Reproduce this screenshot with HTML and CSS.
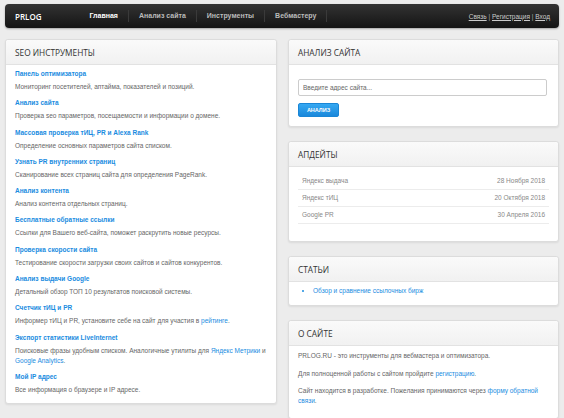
FILE: index.html
```html
<!DOCTYPE html>
<html lang="ru">
<head>
    <meta charset="UTF-8">
    <meta name="viewport" content="width=device-width, initial-scale=1.0">
    <title>PRLOG - инструменты для вебмастера</title>
    <link rel="stylesheet" href="styles.css">
</head>
<body>
    <!-- верхнее меню -->
    <div class="navbar">
        <a class="brand" href="#">PRLOG</a>
        <ul class="nav">
            <li class="active"><a href="#">Главная</a></li>
            <li><a href="#">Анализ сайта</a></li>
            <li><a href="#">Инструменты</a></li>
            <li><a href="#">Вебмастеру</a></li>
        </ul>
        <div class="user-links">
            <a href="#">Связь</a> | <a href="#">Регистрация</a> | <a href="#">Вход</a>
        </div>
    </div>

    <div class="columns">
        <!-- левая колонка -->
        <div class="panel tools">
            <div class="panel-head">SEO ИНСТРУМЕНТЫ</div>
            <div class="panel-body">
                <div class="tool">
                    <a class="tool-title" href="#">Панель оптимизатора</a>
                    <p>Мониторинг посетителей, аптайма, показателей и позиций.</p>
                </div>
                <div class="tool">
                    <a class="tool-title" href="#">Анализ сайта</a>
                    <p>Проверка seo параметров, посещаемости и информации о домене.</p>
                </div>
                <div class="tool">
                    <a class="tool-title" href="#">Массовая проверка тИЦ, PR и Alexa Rank</a>
                    <p>Определение основных параметров сайта списком.</p>
                </div>
                <div class="tool">
                    <a class="tool-title" href="#">Узнать PR внутренних страниц</a>
                    <p>Сканирование всех страниц сайта для определения PageRank.</p>
                </div>
                <div class="tool">
                    <a class="tool-title" href="#">Анализ контента</a>
                    <p>Анализ контента отдельных страниц.</p>
                </div>
                <div class="tool">
                    <a class="tool-title" href="#">Бесплатные обратные ссылки</a>
                    <p>Ссылки для Вашего веб-сайта, поможет раскрутить новые ресурсы.</p>
                </div>
                <div class="tool">
                    <a class="tool-title" href="#">Проверка скорости сайта</a>
                    <p>Тестирование скорости загрузки своих сайтов и сайтов конкурентов.</p>
                </div>
                <div class="tool">
                    <a class="tool-title" href="#">Анализ выдачи Google</a>
                    <p>Детальный обзор ТОП 10 результатов поисковой системы.</p>
                </div>
                <div class="tool">
                    <a class="tool-title" href="#">Счетчик тИЦ и PR</a>
                    <p>Информер тИЦ и PR, установите себе на сайт для участия в <a href="#">рейтинге</a>.</p>
                </div>
                <div class="tool">
                    <a class="tool-title" href="#">Экспорт статистики LiveInternet</a>
                    <p>Поисковые фразы удобным списком. Аналогичные утилиты для <a href="#">Яндекс Метрики</a> и <a href="#">Google Analytics</a>.</p>
                </div>
                <div class="tool">
                    <a class="tool-title" href="#">Мой IP адрес</a>
                    <p>Все информация о браузере и IP адресе.</p>
                </div>
            </div>
        </div>

        <!-- правая колонка -->
        <div class="side">
            <div class="panel">
                <div class="panel-head">АНАЛИЗ САЙТА</div>
                <div class="panel-body analyze">
                    <input class="site-input" type="text" placeholder="Введите адрес сайта...">
                    <button class="btn-blue">АНАЛИЗ</button>
                </div>
            </div>

            <div class="panel">
                <div class="panel-head">АПДЕЙТЫ</div>
                <div class="panel-body updates">
                    <div class="update-row"><span>Яндекс выдача</span><span>28 Ноября 2018</span></div>
                    <div class="update-row"><span>Яндекс тИЦ</span><span>20 Октября 2018</span></div>
                    <div class="update-row"><span>Google PR</span><span>30 Апреля 2016</span></div>
                </div>
            </div>

            <div class="panel">
                <div class="panel-head">СТАТЬИ</div>
                <div class="panel-body articles">
                    <ul>
                        <li><a href="#">Обзор и сравнение ссылочных бирж</a></li>
                    </ul>
                </div>
            </div>

            <div class="panel">
                <div class="panel-head">О САЙТЕ</div>
                <div class="panel-body about">
                    <p>PRLOG.RU - это инструменты для вебмастера и оптимизатора.</p>
                    <p>Для полноценной работы с сайтом пройдите <a href="#">регистрацию</a>.</p>
                    <p>Сайт находится в разработке. Пожелания принимаются через <a href="#">форму обратной<br>связи</a>.</p>
                </div>
            </div>
        </div>
    </div>
</body>
</html>
```

FILE: styles.css
```css
/* общие стили страницы */
body {
    margin: 0;
    padding: 4px 5px;
    background-color: #ececec;
    font-family: "Liberation Sans", Arial, sans-serif;
    font-size: 6.5px;
    color: #666;
}

a {
    color: #1a8cdf;
    text-decoration: none;
}

p {
    margin: 0;
}

/* верхнее меню */
.navbar {
    display: flex;
    align-items: center;
    height: 24px;
    padding: 0 9px 0 10px;
    border-radius: 4px;
    background: linear-gradient(#333, #141414);
    box-shadow: 0 1px 2px rgba(0, 0, 0, 0.3);
    margin-bottom: 11px;
}

.brand {
    font-family: "Open Sans", sans-serif;
    font-weight: 600;
    font-size: 8px;
    color: #fff;
    margin-right: 38px;
}

.nav {
    display: flex;
    list-style: none;
    margin: 0;
    padding: 0;
    flex: 1;
}

.nav li {
    padding: 0 10px;
    border-right: 1px solid #3a3a3a;
    line-height: 12px;
}

.nav a {
    font-weight: bold;
    font-size: 7px;
    color: #bbb;
}

.nav li.active a {
    color: #fff;
}

.user-links {
    color: #aaa;
    font-size: 6.5px;
}

.user-links a {
    color: #ccc;
    text-decoration: underline;
}

/* колонки */
.columns {
    display: grid;
    grid-template-columns: 272px 271px;
    gap: 11px;
    align-items: start;
}

.side {
    display: flex;
    flex-direction: column;
    gap: 14px;
}

/* панели */
.panel {
    background-color: #fff;
    border: 1px solid #dcdcdc;
    border-radius: 3px;
    box-shadow: 0 1px 2px rgba(0, 0, 0, 0.08);
}

.panel-head {
    height: 24px;
    line-height: 25px;
    padding: 0 9px;
    font-family: "Open Sans", sans-serif;
    font-size: 8.3px;
    color: #333;
    background: linear-gradient(#fafafa, #f1f1f1);
    border-bottom: 1px solid #e2e2e2;
    border-radius: 3px 3px 0 0;
}

.panel-body {
    padding: 4px 9px;
}

/* список инструментов */
.tools .panel-body {
    padding: 4px 9px 2px;
}

.tool {
    margin-bottom: 6.3px;
    line-height: 10px;
}

.tool-title {
    display: block;
    font-weight: bold;
    font-size: 6.5px;
    margin-bottom: 3px;
}

/* анализ сайта */
.analyze {
    padding: 14px 9px 9px;
}

.site-input {
    display: block;
    width: 249px;
    height: 17px;
    box-sizing: border-box;
    border: 1px solid #ccc;
    border-radius: 2px;
    padding: 0 4px;
    font-family: "Liberation Sans", Arial, sans-serif;
    font-size: 6.5px;
    margin-bottom: 7px;
}

.site-input::placeholder {
    color: #666;
}

.btn-blue {
    display: block;
    width: 41px;
    height: 14px;
    padding: 0;
    border: 1px solid #1a86d6;
    border-radius: 2px;
    background: linear-gradient(#35a8f2, #1a88db);
    color: #fff;
    font-family: "Liberation Sans", Arial, sans-serif;
    font-size: 5.5px;
    font-weight: bold;
}

/* апдейты */
.updates {
    padding: 6px 9px 17px;
}

.update-row {
    display: flex;
    justify-content: space-between;
    height: 16px;
    line-height: 16px;
    padding: 0 4px;
    border-bottom: 1px solid #ececec;
    font-size: 6.5px;
    color: #888;
}

/* статьи */
.articles {
    padding: 4px 9px 9px;
}

.articles ul {
    margin: 0;
    padding-left: 15px;
    line-height: 10px;
    color: #1a8cdf;
}

/* о сайте */
.about {
    padding: 5px 9px 12px;
    line-height: 10px;
}

.about p {
    margin-bottom: 7.5px;
}

.about p:last-child {
    margin-bottom: 0;
}
```
